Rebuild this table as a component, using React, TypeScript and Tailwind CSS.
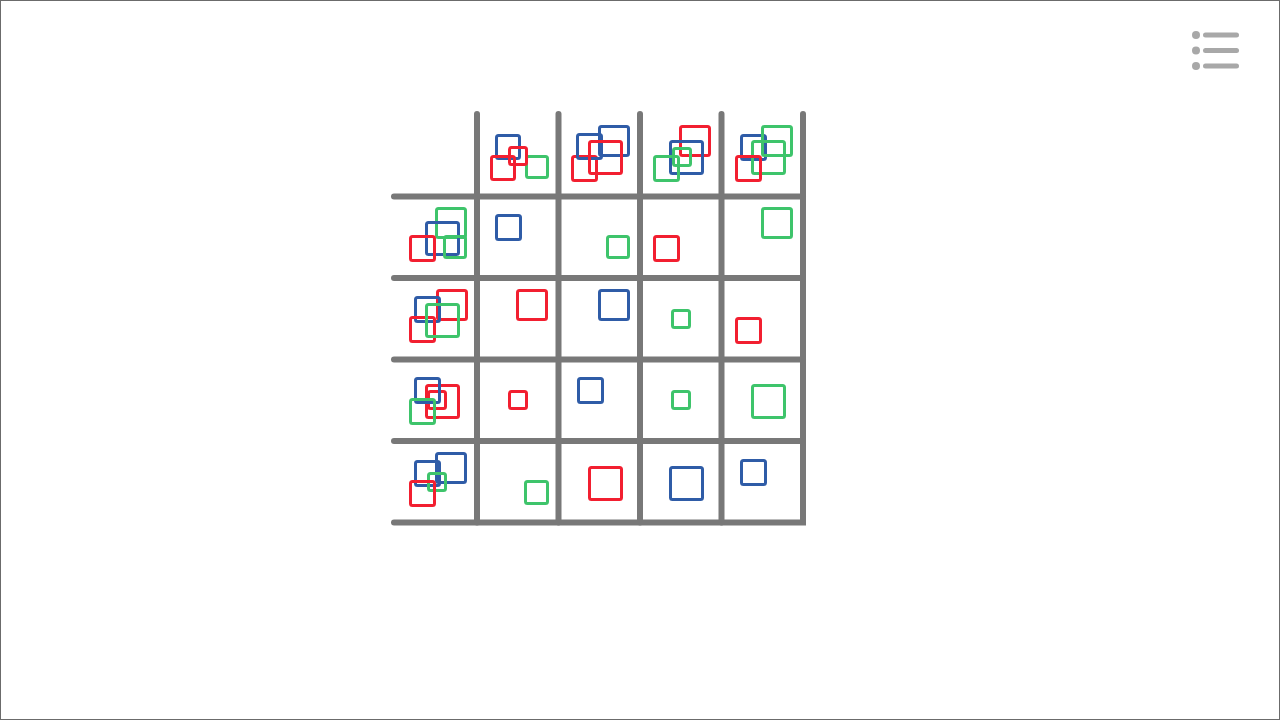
import React from "react";

type Sq = [number, number, number, "B" | "R" | "G"];

const COLORS: Record<string, string> = {
  B: "#2f5ca7",
  R: "#f21f30",
  G: "#3ec46b",
};

// outer-edge left, top, size, colour
const squares: Sq[] = [
  // header row
  [495, 134, 26, "B"],
  [490, 155, 26, "R"],
  [525, 155, 24, "G"],
  [508, 146, 20, "R"],

  [571, 155, 27, "R"],
  [576, 133, 27, "B"],
  [598, 125, 32, "B"],
  [588, 140, 35, "R"],

  [679, 125, 32, "R"],
  [669, 140, 35, "B"],
  [653, 155, 27, "G"],
  [672, 147, 20, "G"],

  [740, 134, 27, "B"],
  [761, 125, 32, "G"],
  [751, 140, 35, "G"],
  [735, 155, 27, "R"],

  // header column
  [435, 207, 32, "G"],
  [425, 221, 35, "B"],
  [409, 235, 27, "R"],
  [443, 235, 24, "G"],

  [436, 289, 32, "R"],
  [414, 296, 27, "B"],
  [409, 316, 27, "R"],
  [425, 303, 35, "G"],

  [427, 390, 20, "R"],
  [425, 384, 35, "R"],
  [414, 377, 27, "B"],
  [409, 398, 27, "G"],

  [414, 460, 27, "B"],
  [435, 452, 32, "B"],
  [427, 472, 20, "G"],
  [409, 480, 27, "R"],

  // body
  [495, 214, 27, "B"],
  [606, 235, 24, "G"],
  [653, 235, 27, "R"],
  [761, 207, 32, "G"],

  [516, 289, 32, "R"],
  [598, 289, 32, "B"],
  [671, 309, 20, "G"],
  [735, 317, 27, "R"],

  [508, 390, 20, "R"],
  [577, 377, 27, "B"],
  [671, 390, 20, "G"],
  [751, 384, 35, "G"],

  [524, 480, 25, "G"],
  [588, 466, 35, "R"],
  [669, 466, 35, "B"],
  [740, 459, 27, "B"],
];

const vx = [477, 558.5, 640, 721.5];
const hy = [196.5, 278, 359.5, 441];

function Diagram() {
  return (
    <svg
      width={424}
      height={424}
      viewBox="388 106 424 424"
      className="block"
      aria-label="grid diagram"
    >
      <g stroke="#787878" strokeWidth={6} strokeLinecap="round" fill="none">
        {vx.map((x) => (
          <line key={"v" + x} x1={x} y1={114} x2={x} y2={522.5} />
        ))}
        {hy.map((y) => (
          <line key={"h" + y} x1={394} y1={y} x2={803} y2={y} />
        ))}
        <polyline
          points="803,114 803,522.5 394,522.5"
          strokeLinejoin="miter"
        />
      </g>
      <g fill="none" strokeWidth={3}>
        {squares.map(([l, t, s, c], i) => (
          <rect
            key={i}
            x={l + 1.5}
            y={t + 1.5}
            width={s - 3}
            height={s - 3}
            rx={2}
            stroke={COLORS[c]}
          />
        ))}
      </g>
    </svg>
  );
}

function MenuIcon() {
  return (
    <svg width={50} height={44} viewBox="0 0 50 44" aria-label="menu">
      <g fill="#a8a8a8">
        <circle cx={6} cy={7} r={4} />
        <circle cx={6} cy={22.5} r={4} />
        <circle cx={6} cy={38} r={4} />
      </g>
      <g stroke="#a8a8a8" strokeWidth={5} strokeLinecap="round">
        <line x1={15.5} y1={7} x2={46.5} y2={7} />
        <line x1={15.5} y1={22.5} x2={46.5} y2={22.5} />
        <line x1={15.5} y1={38} x2={46.5} y2={38} />
      </g>
    </svg>
  );
}

export default function App() {
  return (
    <div
      className="relative w-[1280px] h-[720px] overflow-hidden bg-white border border-[#6b6b6b]"
      style={{ fontFamily: '"Liberation Sans", Arial, sans-serif' }}
    >
      <button
        type="button"
        className="absolute top-[27px] right-[39px] p-0 bg-transparent border-0"
        aria-label="Menu"
      >
        <MenuIcon />
      </button>
      <div className="flex pl-[387px] pt-[105px]">
        <Diagram />
      </div>
    </div>
  );
}
